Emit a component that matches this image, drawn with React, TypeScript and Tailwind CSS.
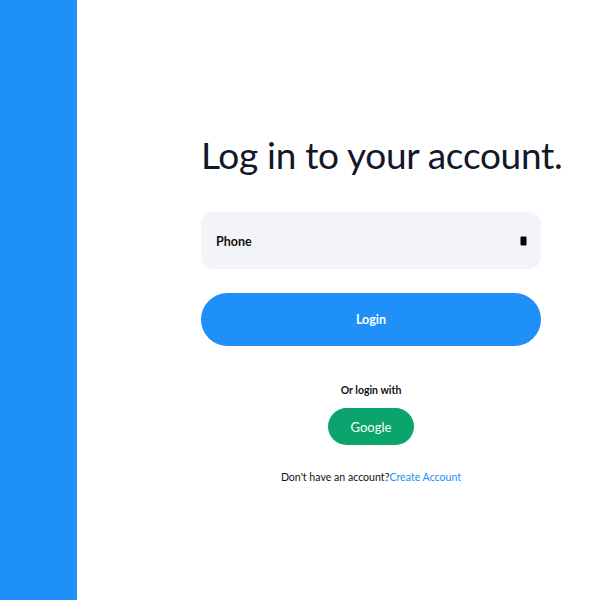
export default function App() {
  return (
    <div className="flex h-[600px] w-[600px] bg-white font-['Lato','Open_Sans',sans-serif] text-[#111]">
      <aside className="h-full w-[77px] shrink-0 bg-[#1e90f7]" />

      <main className="flex-1 pl-[124px] pt-[129px]">
        <h1 className="whitespace-nowrap text-[37px] leading-[52px] tracking-[-0.3px] text-[#111827]">Log in to your account.</h1>

        <div className="mt-[31px] flex h-[57px] w-[340px] items-center justify-between rounded-xl bg-[#f3f4f9] pl-[15px] pr-[14px]">
          <span className="pt-[3px] text-[12.5px] font-bold">Phone</span>
          <svg width="7" height="10" viewBox="0 0 7 10">
            <rect x="0.5" y="0.5" width="6" height="9" rx="1" fill="#000" />
          </svg>
        </div>

        <button className="mt-[24px] flex h-[53px] w-[340px] items-center justify-center rounded-full bg-[#1e90f7] pt-[2px] text-[12.5px] font-bold text-white">
          Login
        </button>

        <div className="mt-[37px] flex w-[340px] flex-col items-center">
          <p className="text-[10.5px] font-bold">Or login with</p>
          <button className="mt-[9px] h-[37px] w-[86px] rounded-full bg-[#0ba46c] pt-[2px] text-[13px] text-white">Google</button>
          <p className="mt-[25px] text-[10.6px]">
            Don't have an account?<a className="text-[#1e90f7]">Create Account</a>
          </p>
        </div>
      </main>
    </div>
  )
}
